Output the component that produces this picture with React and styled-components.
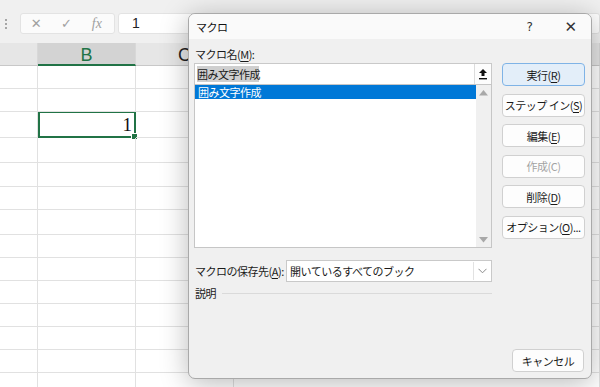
import React from "react";
import styled, { createGlobalStyle } from "styled-components";

const GlobalStyle = createGlobalStyle`
  html, body {
    margin: 0;
    padding: 0;
    background: #ffffff;
  }
  body {
    font-family: "Noto Sans CJK JP", "Liberation Sans", sans-serif;
  }
`;

const rowHeights = [23, 23, 26, 25, 24, 23, 25, 23, 23, 23, 23, 23, 23, 23];
const columns = ["", "B", "C", "D"];

const UpArrowIcon = () => (
  <svg width="10" height="12" viewBox="0 0 10 12">
    <path d="M5 1 L9 5 L6.5 5 L6.5 8 L3.5 8 L3.5 5 L1 5 Z" fill="#111" />
    <rect x="1" y="10" width="8" height="1.4" fill="#111" />
  </svg>
);

const Triangle = ({ down }) => (
  <svg width="9" height="6" viewBox="0 0 9 6">
    <path d={down ? "M0 0 L9 0 L4.5 5.5 Z" : "M0 5.5 L9 5.5 L4.5 0 Z"} fill="#a8a8a8" />
  </svg>
);

const Chevron = () => (
  <svg width="9" height="6" viewBox="0 0 9 6">
    <path d="M0.5 0.8 L4.5 4.8 L8.5 0.8" fill="none" stroke="#8a8a8a" strokeWidth="1" />
  </svg>
);

const App = () => {
  return (
    <React.Fragment>
      <GlobalStyle />
      <Page>
        <Toolbar>
          <Grip>
            <span />
            <span />
            <span />
          </Grip>
          <FxBox>
            <FxGlyph>✕</FxGlyph>
            <FxGlyph>✓</FxGlyph>
            <FxGlyph italic>fx</FxGlyph>
          </FxBox>
          <FormulaInput>1</FormulaInput>
        </Toolbar>

        <Sheet>
          {columns.map((c) => (
            <HeaderCell key={c} active={c === "B"}>
              {c}
            </HeaderCell>
          ))}
          {rowHeights.map((h, i) => (
            <React.Fragment key={i}>
              {columns.map((c) => (
                <Cell key={c} style={{ height: h }} selected={i === 2 && c === "B"}>
                  {i === 2 && c === "B" && (
                    <>
                      <CellValue>1</CellValue>
                      <FillHandle />
                    </>
                  )}
                </Cell>
              ))}
            </React.Fragment>
          ))}
        </Sheet>

        <Dialog>
          <TitleBar>
            <Title>マクロ</Title>
            <TitleButtons>
              <TitleIcon>?</TitleIcon>
              <TitleIcon close>✕</TitleIcon>
            </TitleButtons>
          </TitleBar>
          <Body>
            <Main>
              <LeftCol>
                <FieldLabel>
                  マクロ名(<u>M</u>):
                </FieldLabel>
                <NameInput>
                  <NameText>囲み文字作成</NameText>
                  <UpButton>
                    <UpArrowIcon />
                  </UpButton>
                </NameInput>
                <ListBox>
                  <ListItems>
                    <ListItem selected>囲み文字作成</ListItem>
                  </ListItems>
                  <ScrollBar>
                    <Triangle />
                    <Triangle down />
                  </ScrollBar>
                </ListBox>
                <SaveRow>
                  <FieldLabel>
                    マクロの保存先(<u>A</u>):
                  </FieldLabel>
                  <Select>
                    <SelectText>開いているすべてのブック</SelectText>
                    <SelectArrow>
                      <Chevron />
                    </SelectArrow>
                  </Select>
                </SaveRow>
                <DescHeader>
                  <span>説明</span>
                  <Rule />
                </DescHeader>
              </LeftCol>
              <ButtonCol>
                <DialogButton primary>
                  実行(<u>R</u>)
                </DialogButton>
                <DialogButton>
                  ステップ イン(<u>S</u>)
                </DialogButton>
                <DialogButton>
                  編集(<u>E</u>)
                </DialogButton>
                <DialogButton disabled>作成(C)</DialogButton>
                <DialogButton>
                  削除(<u>D</u>)
                </DialogButton>
                <DialogButton>
                  オプション(<u>O</u>)...
                </DialogButton>
              </ButtonCol>
            </Main>
            <Footer>
              <DialogButton small>キャンセル</DialogButton>
            </Footer>
          </Body>
        </Dialog>
      </Page>
    </React.Fragment>
  );
};

export default App;

const Page = styled.div`
  position: relative;
  width: 600px;
  height: 387px;
  overflow: hidden;
  background: #ffffff;
`;

const Toolbar = styled.div`
  height: 43px;
  background: #f0f0f0;
  display: flex;
  align-items: flex-start;
  padding-top: 13px;
  box-sizing: border-box;
`;

const Grip = styled.div`
  width: 20px;
  height: 21px;
  display: flex;
  flex-direction: column;
  align-items: center;
  justify-content: center;
  gap: 2px;

  span {
    width: 2px;
    height: 2px;
    background: #a6a6a6;
    margin-left: -9px;
  }
`;

const FxBox = styled.div`
  width: 95px;
  height: 21px;
  background: #fbfbfb;
  border: 1px solid #e3e3e3;
  border-radius: 3px;
  box-sizing: border-box;
  display: flex;
  align-items: center;
  justify-content: space-around;
  padding: 0 2px 0 0;
`;

const FxGlyph = styled.span`
  color: #a0a0a0;
  font-family: ${(p) => (p.italic ? '"Liberation Serif", serif' : '"DejaVu Sans", sans-serif')};
  font-style: ${(p) => (p.italic ? "italic" : "normal")};
  font-size: ${(p) => (p.italic ? "14px" : "13px")};
  width: 30px;
  text-align: center;
`;

const FormulaInput = styled.div`
  margin-left: 3px;
  flex: 1;
  height: 21px;
  background: #ffffff;
  border: 1px solid #e3e3e3;
  border-radius: 3px;
  box-sizing: border-box;
  padding-left: 13px;
  font-family: "Liberation Sans", sans-serif;
  font-size: 14px;
  line-height: 19px;
  color: #222;
`;

const Sheet = styled.div`
  display: grid;
  grid-template-columns: 38px 98px 98px 1fr;
`;

const HeaderCell = styled.div`
  height: 23px;
  box-sizing: border-box;
  background: ${(p) => (p.active ? "#d3d3d3" : "#e6e6e6")};
  border-bottom: ${(p) => (p.active ? "2px solid #217346" : "1px solid #c8c8c8")};
  border-right: 1px solid #d8d8d8;
  font-family: "Liberation Sans", sans-serif;
  font-size: 18px;
  line-height: 25px;
  text-align: center;
  color: ${(p) => (p.active ? "#217346" : "#222")};
`;

const Cell = styled.div`
  position: relative;
  box-sizing: border-box;
  border-right: 1px solid #e1e1e1;
  border-bottom: 1px solid #e1e1e1;
  ${(p) => p.selected && "border: 2px solid #217346; border-top-width: 1px;"}
`;

const CellValue = styled.div`
  text-align: right;
  padding-right: 2px;
  font-family: "Liberation Serif", serif;
  font-size: 19px;
  line-height: 24px;
  color: #111;
`;

const FillHandle = styled.div`
  position: absolute;
  right: -4px;
  bottom: -4px;
  width: 5px;
  height: 5px;
  background: #217346;
  border: 1px solid #fff;
`;

const Dialog = styled.div`
  position: absolute;
  left: 188px;
  top: 13px;
  width: 404px;
  height: 366px;
  box-sizing: border-box;
  border: 1px solid #a9a9a9;
  border-radius: 7px;
  background: #f0f0f0;
  box-shadow: 0 4px 28px rgba(0, 0, 0, 0.28);
  display: flex;
  flex-direction: column;
  overflow: hidden;
  font-size: 11px;
  letter-spacing: -0.5px;
  color: #1a1a1a;
`;

const TitleBar = styled.div`
  height: 25px;
  background: #fafafa;
  display: flex;
  align-items: center;
  justify-content: space-between;
  padding: 0 0 0 7px;
  flex-shrink: 0;
`;

const Title = styled.div`
  color: #111;
`;

const TitleButtons = styled.div`
  display: flex;
  align-items: center;
`;

const TitleIcon = styled.div`
  width: 41px;
  text-align: center;
  font-family: "DejaVu Sans", sans-serif;
  font-size: ${(p) => (p.close ? "15px" : "12px")};
  color: #333;
`;

const Body = styled.div`
  flex: 1;
  display: flex;
  flex-direction: column;
  padding: 7px 6px 6px 5px;
`;

const Main = styled.div`
  display: flex;
  gap: 10px;
`;

const LeftCol = styled.div`
  width: 299px;
  display: flex;
  flex-direction: column;
`;

const FieldLabel = styled.div`
  height: 17px;
  line-height: 17px;
  padding-left: 1px;
  white-space: nowrap;

  u {
    text-decoration: underline;
    text-underline-offset: 2px;
  }
`;

const NameInput = styled.div`
  height: 21px;
  box-sizing: border-box;
  background: #ffffff;
  border: 1px solid #c9c9c9;
  border-bottom: none;
  display: flex;
  align-items: center;
`;

const NameText = styled.span`
  flex: 1;
  padding-left: 2px;
  line-height: 18px;
  background: linear-gradient(#cfcfcf, #cfcfcf) no-repeat 2px 1px / 62px 16px;
`;

const UpButton = styled.div`
  width: 16px;
  height: 20px;
  border-left: 1px solid #dcdcdc;
  display: flex;
  align-items: center;
  justify-content: center;
  background: #fdfdfd;
`;

const ListBox = styled.div`
  height: 164px;
  box-sizing: border-box;
  background: #ffffff;
  border: 1px solid #c6c6c6;
  display: flex;
`;

const ListItems = styled.div`
  flex: 1;
`;

const ListItem = styled.div`
  height: 14px;
  line-height: 14px;
  padding-left: 3px;
  background: ${(p) => (p.selected ? "#0078d7" : "transparent")};
  color: ${(p) => (p.selected ? "#ffffff" : "#1a1a1a")};
`;

const ScrollBar = styled.div`
  width: 15px;
  background: #f0f0f0;
  display: flex;
  flex-direction: column;
  align-items: center;
  justify-content: space-between;
  padding: 5px 0 4px;
  box-sizing: border-box;
`;

const SaveRow = styled.div`
  margin-top: 12px;
  display: flex;
  align-items: center;
  justify-content: space-between;
`;

const Select = styled.div`
  width: 206px;
  flex-shrink: 0;
  height: 22px;
  box-sizing: border-box;
  background: #ffffff;
  border: 1px solid #c9c9c9;
  display: flex;
  align-items: center;
`;

const SelectText = styled.span`
  flex: 1;
  padding-left: 3px;
`;

const SelectArrow = styled.div`
  width: 16px;
  height: 18px;
  margin-right: 1px;
  border-left: 1px solid #e2e2e2;
  display: flex;
  align-items: center;
  justify-content: center;
`;

const DescHeader = styled.div`
  margin-top: 4px;
  display: flex;
  align-items: center;
  gap: 6px;
  height: 14px;
  padding-left: 1px;
`;

const Rule = styled.div`
  flex: 1;
  height: 1px;
  background: #dadada;
`;

const ButtonCol = styled.div`
  margin-top: 17px;
  width: 83px;
  display: flex;
  flex-direction: column;
  gap: 7.6px;
`;

const DialogButton = styled.div`
  width: ${(p) => (p.small ? "72px" : "83px")};
  height: 23px;
  box-sizing: border-box;
  border-radius: 4px;
  border: 1px solid ${(p) => (p.primary ? "#7fb3e6" : "#d0d0d0")};
  background: ${(p) => (p.primary ? "#e3eef9" : "#fdfdfd")};
  color: ${(p) => (p.disabled ? "#a3a3a3" : "#1a1a1a")};
  display: flex;
  align-items: center;
  justify-content: center;
  white-space: nowrap;

  u {
    text-decoration: underline;
    text-underline-offset: 2px;
  }
`;

const Footer = styled.div`
  margin-top: auto;
  display: flex;
  justify-content: flex-end;
  padding-right: 1px;
`;
